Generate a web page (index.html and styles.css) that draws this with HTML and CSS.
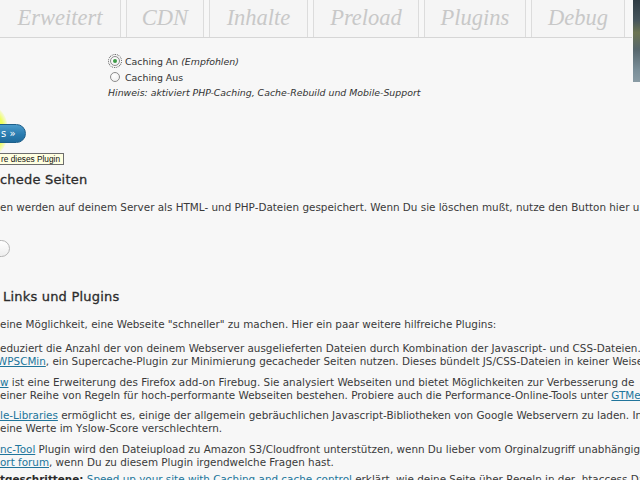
FILE: index.html
```html
<!DOCTYPE html>
<html lang="de">
<head>
<meta charset="utf-8">
<title>WP Super Cache</title>
<link rel="stylesheet" href="styles.css">
</head>
<body>
<div class="page">
  <div class="photo-strip"></div>

  <nav class="tabs">
    <span class="tab">Erweitert</span>
    <span class="tab">CDN</span>
    <span class="tab">Inhalte</span>
    <span class="tab">Preload</span>
    <span class="tab">Plugins</span>
    <span class="tab">Debug</span>
  </nav>

  <div class="radios">
    <label class="radio-row"><span class="radio checked"></span><span>Caching An <em>(Empfohlen)</em></span></label>
    <label class="radio-row"><span class="radio"></span><span>Caching Aus</span></label>
    <p class="hint">Hinweis: aktiviert PHP-Caching, Cache-Rebuild und Mobile-Support</p>
  </div>

  <div class="submit-row">
    <span class="glow"></span>
    <span class="btn-primary">s&nbsp;»</span>
    <span class="tooltip">re dieses Plugin</span>
  </div>

  <h3 class="section-title">chede Seiten</h3>
  <p class="text">en werden auf deinem Server als HTML- und PHP-Dateien gespeichert. Wenn Du sie löschen mußt, nutze den Button hier u</p>
  <div class="btn-secondary"></div>

  <h3 class="section-title links-title">Links und Plugins</h3>
  <p class="text intro">eine Möglichkeit, eine Webseite "schneller" zu machen. Hier ein paar weitere hilfreiche Plugins:</p>

  <div class="plugin-list">
    <p class="text item first">
      <span class="line">eduziert die Anzahl der von deinem Webserver ausgelieferten Dateien durch Kombination der Javascript- und CSS-Dateien.</span>
      <span class="line"><a class="cut-w" href="#">WPSCMin</a>, ein Supercache-Plugin zur Minimierung gecacheder Seiten nutzen. Dieses bündelt JS/CSS-Dateien in keiner Weise</span>
    </p>
    <p class="text item">
      <span class="line"><a href="#">w</a> ist eine Erweiterung des Firefox add-on Firebug. Sie analysiert Webseiten und bietet Möglichkeiten zur Verbesserung de</span>
      <span class="line">einer Reihe von Regeln für hoch-performante Webseiten bestehen. Probiere auch die Performance-Online-Tools unter <a href="#">GTMetrix</a></span>
    </p>
    <p class="text item">
      <span class="line"><a href="#">le-Libraries</a> ermöglicht es, einige der allgemein gebräuchlichen Javascript-Bibliotheken von Google Webservern zu laden. In</span>
      <span class="line">eine Werte im Yslow-Score verschlechtern.</span>
    </p>
    <p class="text item">
      <span class="line"><a href="#">nc-Tool</a> Plugin wird den Dateiupload zu Amazon S3/Cloudfront unterstützen, wenn Du lieber vom Orginalzugriff unabhängig</span>
      <span class="line"><a href="#">ort forum</a>, wenn Du zu diesem Plugin irgendwelche Fragen hast.</span>
    </p>
    <p class="text item last">
      <span class="line"><strong>tgeschrittene:</strong> <a href="#">Speed up your site with Caching and cache-control</a> erklärt, wie deine Seite über Regeln in der .htaccess Datei</span>
    </p>
  </div>
</div>
</body>
</html>
```

FILE: styles.css
```css
html, body {
  margin: 0;
  padding: 0;
  background: #f7f7f7;
}

.page {
  position: relative;
  width: 640px;
  height: 480px;
  overflow: hidden;
  background: #f7f7f7;
  font-family: "DejaVu Sans", Verdana, sans-serif;
  color: #333;
}

.photo-strip {
  position: absolute;
  top: 0;
  right: 0;
  width: 7px;
  height: 82px;
  background: linear-gradient(180deg, #2f3c44 0%, #46555c 25%, #6c7452 40%, #56666c 60%, #7a8e98 85%, #8a9ca5 100%);
}

/* Tabs */
.tabs {
  display: grid;
  grid-template-columns: 121px 78px 99px 106px 102px 94px;
  column-gap: 5px;
  height: 37px;
  width: 632px;
  border-bottom: 1px solid #d6d6d6;
}

.tab {
  box-sizing: border-box;
  height: 37px;
  padding-bottom: 2px;
  border: 1px solid #dcdcdc;
  border-top: none;
  border-bottom: none;
  background: #f5f5f5;
  font-family: "Liberation Serif", "Times New Roman", serif;
  font-style: italic;
  font-size: 22.5px;
  line-height: 35px;
  text-align: center;
  color: #c8c8c8;
  white-space: nowrap;
  overflow: hidden;
}

.tab:first-child {
  border-left: none;
}

/* Radio options */
.radios {
  margin: 15px 0 0 108px;
  font-size: 9.4px;
  color: #333;
}

.radio-row {
  display: flex;
  align-items: center;
  gap: 5px;
  height: 16px;
  margin-left: 2px;
}

.radio {
  position: relative;
  box-sizing: border-box;
  width: 10px;
  height: 10px;
  border: 1px solid #8c8c8c;
  border-radius: 50%;
  background: radial-gradient(circle at 40% 35%, #ffffff 0%, #ececec 100%);
}

.radio.checked {
  outline: 1px dotted #555;
  outline-offset: 1px;
}

.radio.checked::after {
  content: "";
  position: absolute;
  left: 2px;
  top: 2px;
  width: 4px;
  height: 4px;
  border-radius: 50%;
  background: #3d9b46;
}

.hint {
  margin: 2px 0 0;
  font-style: italic;
  line-height: 12px;
  white-space: nowrap;
}

/* Submit row with tooltip */
.submit-row {
  position: relative;
  height: 19px;
  margin-top: 23px;
}

.glow {
  position: absolute;
  left: -22px;
  top: -15px;
  width: 30px;
  height: 48px;
  border-radius: 50%;
  background: radial-gradient(ellipse at center, rgba(255, 255, 40, 1) 0%, rgba(235, 255, 70, 0.85) 50%, rgba(247, 247, 247, 0) 75%);
}

.btn-primary {
  position: relative;
  display: inline-block;
  box-sizing: border-box;
  height: 19px;
  margin-left: -12px;
  padding: 0 9px 0 12px;
  border-radius: 10px;
  background: linear-gradient(180deg, #4b9bcb 0%, #2a7cb0 55%, #1f6b9c 100%);
  border: 1px solid #1d5f8a;
  color: #fff;
  font-size: 10px;
  line-height: 17px;
}

.tooltip {
  position: absolute;
  left: -2px;
  top: 31px;
  padding: 0 3px 0 2px;
  border: 1px solid #6d6d6d;
  background: #ffffe1;
  font-family: "Liberation Sans", Tahoma, sans-serif;
  font-size: 8.3px;
  line-height: 10px;
  color: #111;
  white-space: nowrap;
}

/* Headings and text */
.section-title {
  margin: 31px 0 0;
  font-size: 13px;
  line-height: 16px;
  font-weight: normal;
  color: #2c2c2c;
  letter-spacing: 0.2px;
  -webkit-text-stroke: 0.3px #2c2c2c;
  white-space: nowrap;
}

.links-title {
  margin-top: 32px;
  padding-left: 3px;
}

.text {
  margin: 13px 0 0;
  font-size: 10.4px;
  line-height: 12px;
  color: #3a3a3a;
  white-space: nowrap;
}

.text .line {
  display: block;
}

.text a {
  color: #21759b;
  text-decoration: underline;
}

.text strong {
  color: #2a2a2a;
}

.cut-w {
  margin-left: -3px;
}

.btn-secondary {
  box-sizing: border-box;
  width: 50px;
  height: 17px;
  margin: 27px 0 0 -40px;
  border: 1px solid #b5b5b5;
  border-radius: 9px;
  background: linear-gradient(180deg, #ffffff 0%, #eeeeee 100%);
}

.plugin-list {
  display: flex;
  flex-direction: column;
  gap: 7.5px;
}

.plugin-list .item {
  margin: 0;
  line-height: 13px;
}

.plugin-list .item.first {
  margin-top: 12px;
}

.plugin-list .item.last {
  margin-top: -3px;
}
```
